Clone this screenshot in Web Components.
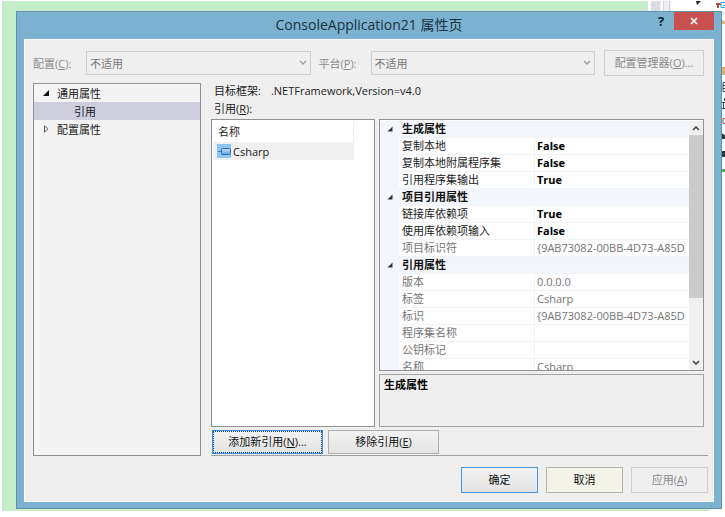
<!DOCTYPE html>
<html lang="zh-CN">
<head>
<meta charset="utf-8">
<title>ConsoleApplication21 属性页</title>
<style>
html{background:#fff}
body{margin:0;font:11px/17px "Open Sans","Noto Sans CJK SC",sans-serif;color:#1b1b1b}
</style>
</head>
<body>
<app-desktop>
  <dialog-window>
    <span slot="title">ConsoleApplication21 属性页</span>
    <config-bar></config-bar>
    <property-pages></property-pages>
    <dialog-footer></dialog-footer>
  </dialog-window>
</app-desktop>
<script>
const define = (name, html, setup) => customElements.define(name, class extends HTMLElement {
  constructor() {
    super();
    const t = document.createElement('template');
    t.innerHTML = '<style>*{box-sizing:border-box}:host{box-sizing:border-box}:host([hidden]){display:none}</style>' + html;
    this.attachShadow({mode: 'open'}).append(t.content.cloneNode(true));
    if (setup) setup(this, this.shadowRoot);
  }
});

define('app-desktop', `
<style>
:host{display:flex;position:relative;min-height:100vh;padding:11px 3px 8px 16px;overflow:hidden}
.editor{position:absolute;inset:1px 16px 6px 2px;background:#c6edc9}
.tools{position:absolute;top:0;right:0;width:77px;height:100%;background:#fff}
::slotted(*){flex:1;position:relative}
</style>
<div class="editor"></div>
<svg class="tools" viewBox="0 0 77 517" preserveAspectRatio="xMaxYMin slice" aria-hidden="true">
  <path fill="#c6edc9" d="M0 508h61v3H0z"/>
  <path fill="#dcdce6" d="M3 1h9v10H3z"/>
  <path fill="#eeeef3" d="M12 1h26v10H12z"/>
  <path fill="#fff" d="M13 1h2v10h-2zM23 1h54v10H23z"/>
  <path fill="#d2d2dc" d="M15 1h1v10h-1zM21 1h1v10h-1z"/>
  <path fill="#222" d="M48 1h5l-4 4z"/>
  <path fill="#b44" d="M68 3h5v2h-2v3h-2V5h-1z"/>
  <path fill="none" stroke="#2ba6de" d="M77 2.500h-4v5h4M77 5.500h-2"/>
  <path fill="#e9dfd2" d="M73 12h4v2h-4z"/>
  <path fill="#e0b070" d="M73 19l4 3v2h-4zM73 67h4v8h-4z"/>
  <path fill="none" stroke="#444" d="M77 82.500h-2v9h2M75 85.500h2M75 88.500h2M76.500 98v3M73 102.500h4M75.500 102v6M73 108.500h4"/>
  <path fill="none" stroke="#a6533b" d="M77 118.500h-2v5h2"/>
  <path fill="#333" d="M73 133l4 2v4h-4zM73 151h4v6h-4z"/>
  <path fill="#56ae4d" d="M73 169h4v3h-4z"/>
</svg>
<slot></slot>`);

define('dialog-window', `
<style>
:host{display:flex;flex-direction:column;background:#7cb2cf;border:1px solid #6590ad;padding:0 7px 6px}
header{display:grid;grid-template-columns:1fr auto 1fr;height:27px}
h1{grid-column:2;margin:0;font-size:14px;line-height:26px;font-weight:400;color:#18323f}
.caption{display:flex;justify-content:flex-end;align-items:flex-start}
button{border:0;padding:0;height:18px;width:40px;display:grid;place-items:center;background:#c8504f;font:inherit}
.help{width:26px;background:none;font-size:13px;font-weight:700;color:#10202a}
main{flex:1;display:flex;flex-direction:column;background:#efefef;border:1px solid #f8f9fa;padding:10px 5px 8px 8px}
</style>
<header><h1><slot name="title"></slot></h1>
<div class="caption"><button class="help" aria-label="帮助">?</button><button aria-label="关闭"><svg width="8" height="8" viewBox="0 0 8 8"><path d="M1 1l6 6M7 1L1 7" stroke="#fff" stroke-width="1.600"/></svg></button></div></header>
<main><slot></slot></main>`);

define('push-button', `
<style>
:host{display:block}
button{width:100%;height:100%;padding:0;font:inherit;line-height:16px;color:#111;background:linear-gradient(#f2f2f2,#e4e4e4);border:1px solid #adadad}
:host([kind=default]) button{border-color:#4a94d8}
:host([kind=cancel]) button{background:#f3f3e9;border-color:#b4b4a8}
:host([kind=focus]) button{border:1px solid #3c8fdc;outline:1px dotted #123a66;outline-offset:-2px}
button:disabled{color:#8a8a8a;background:#efefef;border-color:#d0d0d0}
</style>
<button><slot></slot></button>`, (el, root) => { root.querySelector('button').disabled = el.hasAttribute('disabled'); });

define('config-bar', `
<style>
:host{display:flex;align-items:center;height:26px;margin-right:4px;color:#8d8d8d}
label{width:53px;white-space:nowrap}
.combo{flex:1;display:grid;height:24px}
.combo>*{grid-area:1/1}
select{appearance:none;width:100%;border:1px solid #cfcfcf;border-radius:0;background:#efefef;color:#777;font:inherit;padding:0 3px;opacity:1}
svg{justify-self:end;align-self:center;margin-right:4px}
.second{margin-left:8px;width:52px}
push-button{width:100px;height:26px;margin-left:9px}
</style>
<label for="cfg">配置(<u>C</u>):</label>
<div class="combo"><select id="cfg" disabled><option>不适用</option></select><svg width="8" height="6"><path d="M1 1l3 3 3-3" fill="none" stroke="#a0a0a0" stroke-width="1.500"/></svg></div>
<label for="plat" class="second">平台(<u>P</u>):</label>
<div class="combo"><select id="plat" disabled><option>不适用</option></select><svg width="8" height="6"><path d="M1 1l3 3 3-3" fill="none" stroke="#a0a0a0" stroke-width="1.500"/></svg></div>
<push-button disabled>配置管理器(<u>O</u>)...</push-button>`);

define('nav-tree', `
<style>
:host{display:block;background:#f4f4f4;border:1px solid #8e9197}
ul{list-style:none;margin:0;padding:0}
.row{display:flex;align-items:center;height:18px}
svg{width:8px;height:8px;margin:0 7px 0 8px}
.child .row{padding-left:40px;background:#cdcddc}
</style>
<ul role="tree" aria-label="属性">
<li role="treeitem" aria-expanded="true"><div class="row"><svg viewBox="0 0 8 8"><path d="M7 1v6H1z" fill="#111"/></svg>通用属性</div>
<ul role="group" class="child"><li role="treeitem" aria-selected="true"><div class="row">引用</div></li></ul></li>
<li role="treeitem" aria-expanded="false"><div class="row"><svg viewBox="0 0 8 8"><path d="M2.500.8v6.400L5.800 4z" fill="#fff" stroke="#555"/></svg>配置属性</div></li>
</ul>`);

define('reference-list', `
<style>
:host{display:block;background:#fff;border:1px solid #8e9197;padding:1px}
table{width:calc(100% - 19px);border-collapse:collapse}
th{height:21px;padding:0 5px;text-align:left;font-weight:400;border-right:1px solid #eceff3;border-bottom:1px solid #eef1f5}
td{height:18px;padding:0 4px;background:#f0f0f0}
.item{display:flex;align-items:center;gap:2px}
</style>
<table><thead><tr><th>名称</th></tr></thead><tbody><tr><td><div class="item">
<svg width="14" height="14" viewBox="0 0 14 14"><defs><linearGradient id="g" x2="0" y2="1"><stop stop-color="#c8e4fb"/><stop offset="1" stop-color="#5c9fe0"/></linearGradient></defs><path fill="#8ec5f7" d="M0 0h14v14H0z"/><path d="M1 7.500h4" stroke="#3d7cc2"/><rect x="4.500" y="4.500" width="9" height="6" rx="1" fill="url(#g)" stroke="#2c67b0"/></svg>
<span>Csharp</span></div></td></tr></tbody></table>`);

const rows = [
  ['生成属性'], ['复制本地', 'False', 1], ['复制本地附属程序集', 'False', 1], ['引用程序集输出', 'True', 1],
  ['项目引用属性'], ['链接库依赖项', 'True', 1], ['使用库依赖项输入', 'False', 1], ['项目标识符', '{9AB73082-00BB-4D73-A85D', 0],
  ['引用属性'], ['版本', '0.0.0.0', 0], ['标签', 'Csharp', 0], ['标识', '{9AB73082-00BB-4D73-A85D', 0],
  ['程序集名称', '', 0], ['公钥标记', '', 0], ['名称', 'Csharp', 0]
];
const tri = '<svg width="6" height="6" viewBox="0 0 6 6"><path d="M5.500.5v5h-5z" fill="#333"/></svg>';
define('property-grid', `
<style>
:host{display:flex;min-height:0;background:#fff;border:1px solid #8e9197;padding-top:1px;overflow:hidden}
.view{flex:1;min-width:0;overflow:hidden;contain:size}
table{width:100%;table-layout:fixed;border-collapse:separate;border-spacing:0}
tr{height:17px}
td,th{height:17px;padding:0 0 0 3px;line-height:16px;text-align:left;font-weight:400;white-space:nowrap;overflow:hidden;border-bottom:1px solid #f1f4f7}
td{border-left:1px solid #f1f4f7;padding-left:2px}
td.g,.cat>*{background:#f3f6fa;border-left:0}
td.g{border-bottom-color:#f3f6fa;padding:0;text-align:center}
td.g svg{display:block;margin:auto}
.cat th{font-weight:700;color:#111}
.set td{font-weight:700;color:#000}
.ro{color:#747474}
.bar{width:14px;display:flex;flex-direction:column;background:#f0f0f0;align-items:center}
.bar svg{flex:none;margin:5px 0 4px}
.thumb{width:100%;flex:0 1 163px;background:#cbcbcb}
.bar svg:last-child{margin:auto 0 5px}
</style>
<div class="view"><table aria-label="引用属性"><colgroup><col style="width:19px"><col style="width:135px"><col></colgroup><tbody>${rows.map(r =>
  r.length === 1 ? `<tr class="cat"><td class="g">${tri}</td><th colspan="2">${r[0]}</th></tr>`
  : `<tr class="${r[2] ? 'set' : 'ro'}"><td class="g"></td><th scope="row">${r[0]}</th><td>${r[1]}</td></tr>`).join('')}</tbody></table></div>
<div class="bar"><svg width="8" height="5"><path d="M1 4l3-3 3 3" fill="none" stroke="#444" stroke-width="1.600"/></svg><div class="thumb"></div><svg width="8" height="5"><path d="M1 1l3 3 3-3" fill="none" stroke="#444" stroke-width="1.600"/></svg></div>`);

define('property-pages', `
<style>
:host{flex:1;display:flex;gap:10px;margin-top:7px;min-height:0}
nav-tree{flex:0 1 168px}
section{flex:1;display:flex;flex-direction:column;min-width:0;border-bottom:1px solid #a0a0a0}
.info{padding:0 3px}
.info div{height:18px;line-height:16px;white-space:pre}
.info span{margin-left:10px}
.panes{flex:1;display:flex;gap:4px;min-height:0;margin-right:4px}
reference-list{flex:0 1 164px}
.props{flex:1;min-width:0;display:flex;flex-direction:column;gap:3px}
property-grid{flex:1}
.desc{height:53px;border:1px solid #a3a3a3;padding:1px 4px;font-weight:700;color:#000}
.actions{display:flex;gap:5px;margin:3px 0 1px 1px;height:24px}
push-button{width:111px}
</style>
<nav-tree></nav-tree>
<section>
<div class="info"><div>目标框架:<span>.NETFramework,Version=v4.0</span></div><div>引用(<u>R</u>):</div></div>
<div class="panes"><reference-list></reference-list><div class="props"><property-grid></property-grid><div class="desc">生成属性</div></div></div>
<div class="actions"><push-button kind="focus">添加新引用(<u>N</u>)...</push-button><push-button>移除引用(<u>E</u>)</push-button></div>
</section>`);

define('dialog-footer', `
<style>
:host{display:flex;justify-content:flex-end;gap:8px;height:26px;margin-top:11px}
push-button{width:77px}
</style>
<push-button kind="default">确定</push-button><push-button kind="cancel">取消</push-button><push-button disabled>应用(<u>A</u>)</push-button>`);
</script>
</body>
</html>
